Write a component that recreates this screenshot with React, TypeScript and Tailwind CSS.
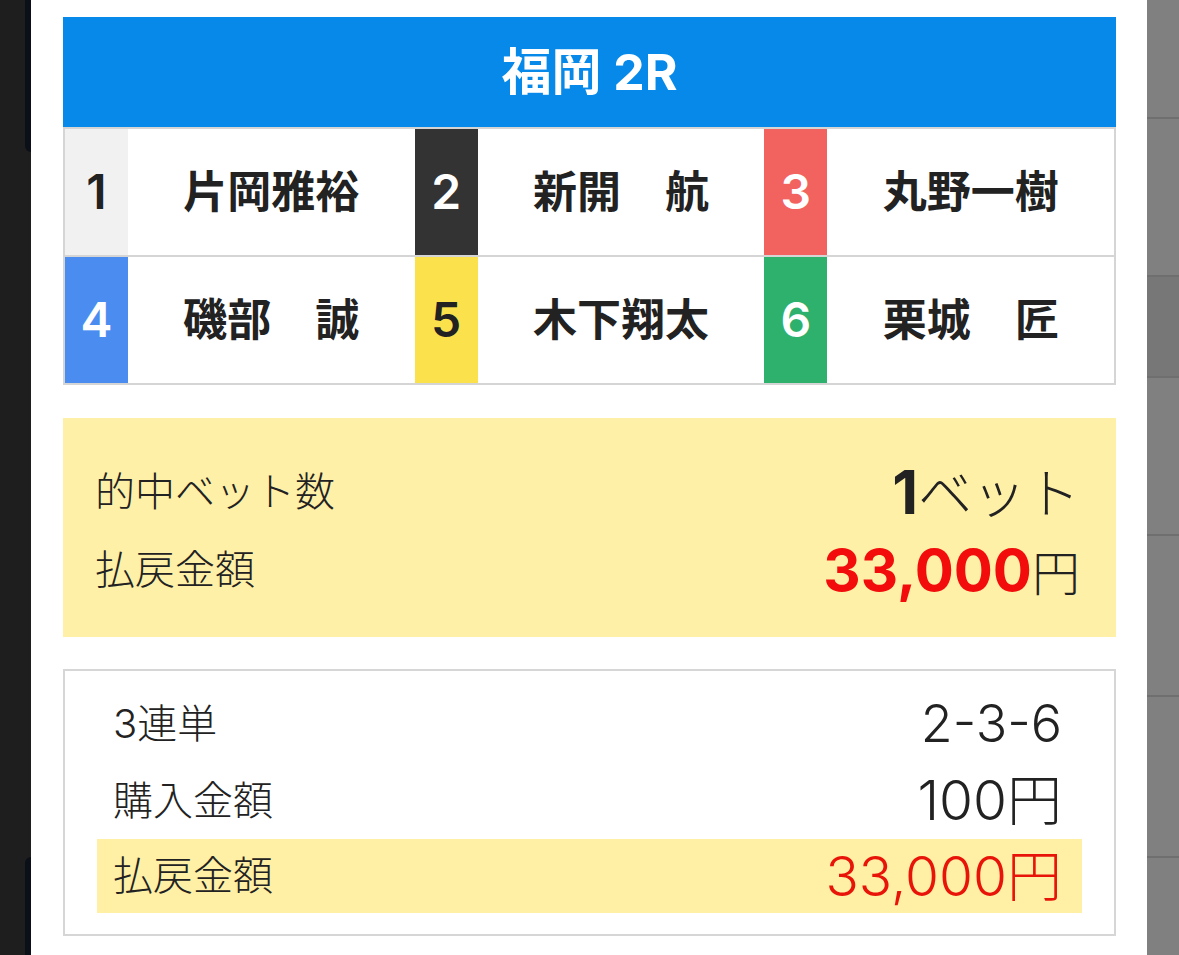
const racers = [
  { no: 1, name: '片岡雅裕', box: 'bg-[#f1f1f1] text-[#222222]' },
  { no: 2, name: '新開　航', box: 'bg-[#333333] text-white' },
  { no: 3, name: '丸野一樹', box: 'bg-[#f2625f] text-white' },
  { no: 4, name: '磯部　誠', box: 'bg-[#4b8cf0] text-white' },
  { no: 5, name: '木下翔太', box: 'bg-[#fbe14c] text-[#222222]' },
  { no: 6, name: '栗城　匠', box: 'bg-[#2db16c] text-white' },
];

const font = "font-['Inter','Noto_Sans_CJK_JP',sans-serif]";

function RacerCell({ no, name, box }: { no: number; name: string; box: string }) {
  return (
    <div className="flex h-[126px] bg-white">
      <div className={`w-[63px] flex items-center justify-center text-[48px] font-semibold ${box}`}>{no}</div>
      <div className="flex-1 flex items-center justify-center text-[44px] font-bold text-[#222222]">{name}</div>
    </div>
  );
}

function SideStripLeft() {
  return (
    <div className="w-[31px] shrink-0 bg-[#1e1e1e] flex flex-col justify-between">
      <div className="ml-[25px] h-[152px] bg-[#0b1018] rounded-bl-[14px]" />
      <div className="ml-[25px] h-[98px] bg-[#0b1018] rounded-tl-[14px]" />
    </div>
  );
}

function SideStripRight() {
  return (
    <div className="w-[32px] shrink-0 bg-[#808080] flex flex-col">
      <div className="h-[119px] border-b-2 border-[#6f6f6f]" />
      <div className="h-[158px] border-b-2 border-[#6f6f6f]" />
      <div className="h-[101px] bg-[#777777] border-b-2 border-[#6f6f6f]" />
      <div className="h-[158px] border-b-2 border-[#6f6f6f]" />
      <div className="h-[161px] border-b-2 border-[#6f6f6f]" />
      <div className="h-[161px] border-b-2 border-[#6f6f6f]" />
      <div className="flex-1" />
    </div>
  );
}

export default function App() {
  return (
    <div className={`flex h-[955px] w-[1179px] overflow-hidden ${font}`}>
      <SideStripLeft />
      <div className="flex-1 bg-white pt-[17px] pl-8 pr-[31px]">
        <div className="h-[110px] bg-[#0689e8] flex items-center justify-center text-white text-[50px] font-bold">
          福岡 2R
        </div>
        <div className="border-2 border-[#d5d5d5] bg-[#d5d5d5] grid grid-cols-3 gap-y-[2px]">
          {racers.map((r) => (
            <RacerCell key={r.no} {...r} />
          ))}
        </div>

        <div className="mt-[33px] h-[219px] bg-[#fff0a8] pl-8 pr-9 pt-[7px] flex flex-col justify-center text-[#222222]">
          <div className="h-[78px] flex items-center justify-between">
            <span className="text-[40px] font-light">的中ベット数</span>
            <span className="text-[54px] font-light">
              <span className="font-bold text-[60px]">1</span>ベット
            </span>
          </div>
          <div className="h-[78px] flex items-center justify-between">
            <span className="text-[40px] font-light">払戻金額</span>
            <span className="text-[48px] font-light">
              <span className="font-bold text-[58px] text-[#f20c0c]">33,000</span>円
            </span>
          </div>
        </div>

        <div className="mt-8 h-[267px] border-2 border-[#d6d6d6] pt-[14px] text-[#222222]">
          <div className="mx-8 h-[77px] pl-4 pr-5 flex items-center justify-between">
            <span className="text-[40px] font-light">3連単</span>
            <span className="text-[52px] font-light">2-3-6</span>
          </div>
          <div className="mx-8 h-[77px] pl-4 pr-5 flex items-center justify-between">
            <span className="text-[40px] font-light">購入金額</span>
            <span className="text-[55px] font-light">100円</span>
          </div>
          <div className="mx-8 h-[74px] pl-4 pr-5 bg-[#fff0a5] flex items-center justify-between">
            <span className="text-[40px] font-light">払戻金額</span>
            <span className="text-[55px] font-light text-[#e8140a]">33,000円</span>
          </div>
        </div>
      </div>
      <SideStripRight />
    </div>
  );
}
